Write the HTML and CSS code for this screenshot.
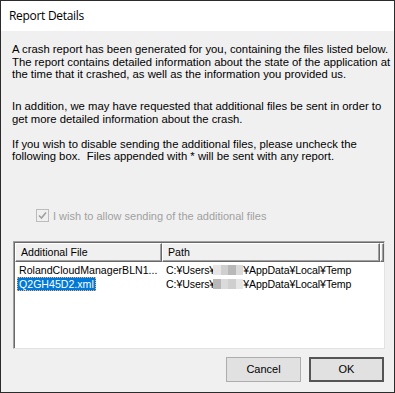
FILE: index.html
```html
<!DOCTYPE html>
<html lang="en">
<head>
    <meta charset="UTF-8">
    <title>Report Details</title>
    <link rel="stylesheet" href="styles.css">
</head>
<body>
    <div id="window">
        <div class="title-bar">Report Details</div>
        <div class="content">
            <p class="msg msg-first">A crash report has been generated for you, containing the files listed below.<br>The report contains detailed information about the state of the application at<br>the time that it crashed, as well as the information you provided us.</p>
            <p class="msg msg-second">In addition, we may have requested that additional files be sent in order to<br>get more detailed information about the crash.</p>
            <p class="msg msg-third">If you wish to disable sending the additional files, please uncheck the<br>following box.&nbsp; Files appended with * will be sent with any report.</p>

            <label class="check">
                <span class="check-box">
                    <svg width="9" height="9" viewBox="0 0 9 9"><path d="M1 4.5 L3.5 7 L8 1.5" fill="none" stroke="#a0a0a0" stroke-width="1.6"/></svg>
                </span>
                <span class="check-text">I wish to allow sending of the additional files</span>
            </label>

            <div class="list">
                <div class="list-head">
                    <div class="col col-file">Additional File</div>
                    <div class="col col-path">Path</div>
                    <div class="col col-rest"></div>
                </div>
                <div class="list-row">
                    <div class="cell cell-file"><span>RolandCloudManagerBLN1...</span></div>
                    <div class="cell cell-path">C:¥Users¥<span class="blur"><i class="b1"></i><i class="b2"></i><i class="b3"></i><i class="b4"></i></span>¥AppData¥Local¥Temp</div>
                </div>
                <div class="list-row">
                    <div class="cell cell-file"><span class="selected">Q2GH45D2.xml</span></div>
                    <div class="cell cell-path">C:¥Users¥<span class="blur"><i class="b3"></i><i class="b4"></i><i class="b2"></i><i class="b1"></i></span>¥AppData¥Local¥Temp</div>
                </div>
            </div>

            <div class="buttons">
                <button class="btn">Cancel</button>
                <button class="btn btn-default">OK</button>
            </div>
        </div>
    </div>
</body>
</html>
```

FILE: styles.css
```css
*{
    margin: 0;
    padding: 0;
    box-sizing: border-box;
}
html,body{
    width: 395px;
    height: 393px;
    overflow: hidden;
}
#window{
    width: 395px;
    height: 393px;
    border: 1px solid #2b2b2b;
    background: #f0f0f0;
    display: flex;
    flex-direction: column;
    font-family: "Liberation Sans", Arial, sans-serif;
    font-size: 11px;
    color: #000;
}
.title-bar{
    height: 30px;
    background: #fff;
    padding-left: 8px;
    line-height: 29px;
    font-family: "Open Sans", "Noto Sans", sans-serif;
    font-size: 12px;
    letter-spacing: -0.3px;
    color: #000;
}
.content{
    flex: 1;
    display: flex;
    flex-direction: column;
    padding: 12px 10px 0 11px;
}
.msg{
    font-size: 11.3px;
    line-height: 12.7px;
    white-space: nowrap;
}
.msg-second{
    margin-top: 19px;
}
.msg-third{
    margin-top: 12px;
}
.check{
    display: flex;
    align-items: center;
    gap: 4px;
    margin-top: 46px;
    margin-left: 24px;
    height: 14px;
    color: #a0a0a0;
}
.check-box{
    width: 13px;
    height: 13px;
    border: 1px solid #bcbcbc;
    background: #f0f0f0;
    display: flex;
    align-items: center;
    justify-content: center;
}
.check-text{
    font-size: 11px;
}
.list{
    margin-top: 18px;
    margin-left: 1px;
    width: 372px;
    height: 108px;
    background: #fff;
    border-top: 1px solid #a0a0a0;
    border-left: 1px solid #a0a0a0;
    border-right: 1px solid #e3e3e3;
    border-bottom: 1px solid #e3e3e3;
    box-shadow: inset 1px 1px 0 #696969;
    font-size: 10.6px;
}
.list-head{
    display: flex;
    height: 19px;
    margin: 1px 0 0 1px;
}
.col{
    background: #f0f0f0;
    border-top: 1px solid #fff;
    border-left: 1px solid #fff;
    border-right: 1px solid #696969;
    border-bottom: 1px solid #696969;
    box-shadow: inset -1px -1px 0 #a0a0a0;
    line-height: 16px;
    padding-left: 5px;
}
.col-file{
    width: 147px;
}
.col-path{
    width: 218px;
}
.col-rest{
    width: 4px;
    padding: 0;
}
.list-row{
    display: flex;
    height: 14px;
    line-height: 14px;
    margin-left: 1px;
}
.list-head + .list-row{
    margin-top: 1px;
}
.cell-file{
    width: 147px;
    padding-left: 2px;
}
.cell-file span{
    display: inline-block;
    padding: 0 2px;
    height: 14px;
}
.cell-path{
    padding-left: 4px;
    white-space: nowrap;
    letter-spacing: -0.1px;
}
.selected{
    background: #0078d7;
    color: #fff;
    outline: 1px dotted #ffb070;
    outline-offset: -1px;
}
.blur{
    display: inline-flex;
    vertical-align: middle;
    width: 30px;
    height: 10px;
    margin: -2px 0 0 -2px;
}
.blur i{
    flex: 1;
    height: 10px;
}
.b1{ background: #e6e6e6; }
.b2{ background: #cfcfcf; }
.b3{ background: #b8b8b8; }
.b4{ background: #dadada; }
.buttons{
    display: flex;
    justify-content: flex-end;
    gap: 8px;
    margin-top: 8px;
}
.btn{
    width: 75px;
    height: 25px;
    background: #e1e1e1;
    border: 1px solid #adadad;
    font-family: "Liberation Sans", Arial, sans-serif;
    font-size: 11px;
    color: #000;
}
.btn-default{
    border: 2px solid #555;
}
```
